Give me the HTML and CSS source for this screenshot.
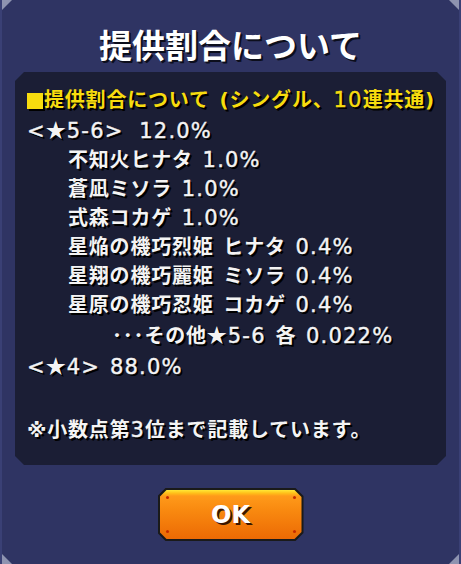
FILE: index.html
```html
<!DOCTYPE html>
<html lang="ja">
<head>
<meta charset="utf-8">
<link rel="stylesheet" href="styles.css">
</head>
<body>
<div class="panel">
  <span class="corner tl"></span><span class="corner tr"></span><span class="corner bl"></span><span class="corner br"></span>
  <h1 class="title">提供割合について</h1>
  <div class="box">
    <p class="line heading"><span class="sq"></span>提供割合について (シングル、<span class="n">10</span>連共通)</p>
    <p class="line"><span class="n">&lt;<span class="star">★</span>5-6&gt;</span> <span class="n gap">12.0%</span></p>
    <p class="line sub">不知火ヒナタ <span class="n">1.0%</span></p>
    <p class="line sub">蒼凪ミソラ <span class="n">1.0%</span></p>
    <p class="line sub">式森コカゲ <span class="n">1.0%</span></p>
    <p class="line sub">星焔の機巧烈姫 ヒナタ <span class="n">0.4%</span></p>
    <p class="line sub">星翔の機巧麗姫 ミソラ <span class="n">0.4%</span></p>
    <p class="line sub">星原の機巧忍姫 コカゲ <span class="n">0.4%</span></p>
    <p class="line sub2">･･･その他<span class="star">★</span><span class="n">5-6</span> 各 <span class="n">0.022%</span></p>
    <p class="line"><span class="n">&lt;<span class="star">★</span>4&gt;</span> <span class="n">88.0%</span></p>
    <p class="line note">※小数点第<span class="n">3</span>位まで記載しています。</p>
  </div>
  <div class="actions">
    <button class="ok"><span class="dot d1"></span><span class="dot d2"></span><span class="dot d3"></span><span class="dot d4"></span>OK</button>
  </div>
</div>
</body>
</html>
```
FILE: styles.css
```css
html, body {
  margin: 0;
  padding: 0;
  background: #2f3463;
}
.panel {
  position: relative;
  width: 461px;
  height: 564px;
  box-sizing: border-box;
  background: #2f3463;
  border-left: 2px solid #3a4075;
  border-right: 2px solid #3a4075;
  font-family: "Noto Sans CJK JP", "Noto Sans", sans-serif;
  color: #f4f4f4;
  display: flex;
  flex-direction: column;
  overflow: hidden;
}
.corner {
  position: absolute;
  width: 12px;
  height: 12px;
  background: #8e93b0;
}
.corner.tl { top: 0; left: -2px; clip-path: polygon(0 0, 100% 0, 0 100%); }
.corner.tr { top: 0; right: -2px; clip-path: polygon(0 0, 100% 0, 100% 100%); }
.corner.bl { bottom: 0; left: -2px; clip-path: polygon(0 0, 100% 100%, 0 100%); }
.corner.br { bottom: 0; right: -2px; clip-path: polygon(100% 0, 100% 100%, 0 100%); }
.title {
  margin: 0;
  height: 72px;
  box-sizing: border-box;
  padding-top: 20px;
  text-align: center;
  font-size: 33px;
  line-height: 48px;
  font-weight: 700;
  color: #ffffff;
  text-shadow: 2px 2px 0 #0c0e1c, 1px 1px 0 #0c0e1c;
}
.box {
  margin: 0 13px;
  padding: 14px 10px 20px 12px;
  background: #1b1e35;
  clip-path: polygon(9px 0, calc(100% - 9px) 0, 100% 9px, 100% calc(100% - 9px), calc(100% - 9px) 100%, 9px 100%, 0 calc(100% - 9px), 0 9px);
}
.line {
  margin: 0;
  font-family: "DejaVu Sans", "Noto Sans CJK JP", sans-serif;
  font-size: 20px;
  line-height: 29px;
  font-weight: 700;
  letter-spacing: 0.8px;
  word-spacing: 2px;
  white-space: nowrap;
  text-shadow: 2px 2px 0 #000000;
}
.n {
  font-size: 21px;
  font-weight: 400;
  letter-spacing: 1.2px;
  -webkit-text-stroke: 0.4px currentColor;
}
.gap {
  margin-left: 6px;
}
.star {
  font-family: "Noto Sans CJK JP", sans-serif;
  font-size: 20px;
  font-weight: 700;
  letter-spacing: 1px;
  -webkit-text-stroke: 0;
}
.heading {
  color: #f7dc0e;
  display: flex;
  align-items: center;
}
.sq {
  display: inline-block;
  width: 16px;
  height: 16px;
  background: #f7dc0e;
  margin-right: 1px;
  box-shadow: 2px 2px 0 #000;
}
.sub { padding-left: 41px; }
.sub2 { padding-left: 85px; }
.note { margin-top: 34px; }
.actions {
  display: flex;
  justify-content: center;
  padding-top: 23px;
}
.ok {
  position: relative;
  width: 146px;
  height: 53px;
  padding: 0;
  border: none;
  background: #1a1a1a;
  clip-path: polygon(8px 0, calc(100% - 8px) 0, 100% 8px, 100% calc(100% - 8px), calc(100% - 8px) 100%, 8px 100%, 0 calc(100% - 8px), 0 8px);
  font-family: "DejaVu Sans", "Liberation Sans", sans-serif;
  font-weight: 700;
  font-size: 24px;
  color: #ffffff;
  text-shadow: 2px 2px 0 #3a1500;
  z-index: 0;
}
.ok::before {
  content: "";
  position: absolute;
  inset: 2px;
  background: linear-gradient(#ffe838 0, #ffc21a 3px, #ff9a1a 6px, #f98a10 40%, #ec6a04 100%);
  clip-path: polygon(7px 0, calc(100% - 7px) 0, 100% 7px, 100% calc(100% - 7px), calc(100% - 7px) 100%, 7px 100%, 0 calc(100% - 7px), 0 7px);
  z-index: -1;
}
.dot {
  position: absolute;
  width: 3px;
  height: 3px;
  border-radius: 50%;
  background: #c42a00;
}
.d1 { top: 8px; left: 8px; }
.d2 { top: 8px; right: 8px; }
.d3 { bottom: 8px; left: 8px; }
.d4 { bottom: 8px; right: 8px; }
```
